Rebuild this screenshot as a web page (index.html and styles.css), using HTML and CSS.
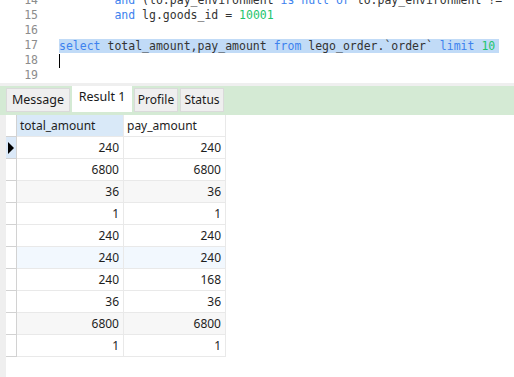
FILE: index.html
```html
<!DOCTYPE html>
<html lang="en">
<head>
<meta charset="UTF-8" />
<title>Query Result</title>
<link rel="stylesheet" href="styles.css">
</head>
<body>

<div class="editor">
  <div class="gutter">
    <div class="ln">14</div>
    <div class="ln">15</div>
    <div class="ln">16</div>
    <div class="ln">17</div>
    <div class="ln">18</div>
    <div class="ln">19</div>
  </div>
  <div class="code">
    <div class="line">        <span class="kw">and</span> (lo.pay_environment <span class="kw">is null or</span> lo.pay_environment !=</div>
    <div class="line">        <span class="kw">and</span> lg.goods_id = <span class="num">10001</span></div>
    <div class="line"> </div>
    <div class="line"><span class="sel"><span class="kw">select</span> total_amount,pay_amount <span class="kw">from</span> lego_order.`order` <span class="kw">limit</span> <span class="num">10</span></span></div>
    <div class="line"><span class="caret"></span></div>
    <div class="line"> </div>
  </div>
</div>

<div class="sep"></div>

<div class="tabbar">
  <div class="tab tab-message">Message</div>
  <div class="tab tab-result active">Result 1</div>
  <div class="tab tab-profile">Profile</div>
  <div class="tab tab-status">Status</div>
</div>

<div class="results">
  <div class="strip"></div>
  <table class="grid">
    <thead>
      <tr>
        <th class="ind"></th>
        <th class="col-total focus">total_amount</th>
        <th class="col-pay">pay_amount</th>
      </tr>
    </thead>
    <tbody>
      <tr class="current"><td class="ind"><span class="arrow"></span></td><td>240</td><td>240</td></tr>
      <tr><td class="ind"></td><td>6800</td><td>6800</td></tr>
      <tr class="alt"><td class="ind"></td><td>36</td><td>36</td></tr>
      <tr><td class="ind"></td><td>1</td><td>1</td></tr>
      <tr><td class="ind"></td><td>240</td><td>240</td></tr>
      <tr class="hover"><td class="ind"></td><td>240</td><td>240</td></tr>
      <tr><td class="ind"></td><td>240</td><td>168</td></tr>
      <tr><td class="ind"></td><td>36</td><td>36</td></tr>
      <tr class="alt"><td class="ind"></td><td>6800</td><td>6800</td></tr>
      <tr><td class="ind"></td><td>1</td><td>1</td></tr>
    </tbody>
  </table>
</div>

</body>
</html>
```

FILE: styles.css
```css
body {
  margin: 0;
  width: 514px;
  height: 377px;
  overflow: hidden;
  background: #fff;
  font-family: "Noto Sans", sans-serif;
}
.editor {
  height: 83px;
  overflow: hidden;
  display: flex;
  background: #fff;
  font-family: "DejaVu Sans Mono", monospace;
  font-size: 11.5px;
  line-height: 15px;
}
.gutter {
  width: 38px;
  margin-top: -7px;
  text-align: right;
  color: #8c8c8c;
}
.code {
  margin-top: -7px;
  padding-left: 21px;
  color: #333;
}
.line {
  height: 15px;
  white-space: pre;
}
.kw {
  color: #3d82ee;
}
.num {
  color: #1ec46c;
}
.sel {
  display: inline-block;
  height: 14px;
  padding-right: 4px;
  margin-top: 1px;
  line-height: 14px;
  vertical-align: top;
  background: #c1dbf7;
}
.caret {
  display: inline-block;
  width: 1px;
  height: 14px;
  margin-top: 1px;
  vertical-align: top;
  background: #000;
}
.sep {
  height: 3px;
  background: #efefef;
}
.tabbar {
  height: 29px;
  display: flex;
  align-items: flex-start;
  gap: 2px;
  padding-left: 6px;
  background: #d4ead4;
}
.tab {
  box-sizing: border-box;
  margin-top: 2px;
  height: 24px;
  line-height: 22px;
  text-align: center;
  font-size: 12px;
  color: #1a1a1a;
  background: #efefef;
  border: 1px solid #dadada;
}
.tab-message { width: 64px; font-size: 12.5px; }
.tab-result { width: 60px; font-size: 12.5px; }
.tab-profile { width: 44px; }
.tab-status { width: 44px; }
.tab.active {
  margin-top: 0;
  height: 26px;
  line-height: 20px;
  background: #fff;
  border-color: #fff;
}
.results {
  display: flex;
  height: 262px;
}
.strip {
  width: 6px;
  background: #efefef;
}
.grid {
  border-collapse: collapse;
  align-self: flex-start;
  font-size: 12px;
  color: #1e1e1e;
}
.grid th,
.grid td {
  padding: 0 4px 0 3px;
  height: 21px;
  line-height: 21px;
  border: 1px solid #e9e9e9;
  border-top: none;
}
.grid th {
  text-align: left;
  font-weight: normal;
  background: #fff;
}
.grid td {
  text-align: right;
}
.grid .ind {
  width: 10px;
  padding: 0;
  border-left: none;
  border-right: 1px solid #d2d2d2;
  border-bottom: 1px solid #d2d2d2;
  background: #fff;
}
.col-total {
  width: 99px;
}
.col-pay {
  width: 94px;
}
.grid th.focus {
  background: #d9e9f8;
}
.grid tr.alt td {
  background: #f7f7f7;
}
.grid tr.hover td {
  background: #f2f8fe;
}
.grid tr.alt td.ind,
.grid tr.hover td.ind {
  background: #fff;
}
.grid tr.current td.ind {
  background: #dbe9f8;
  vertical-align: middle;
}
.arrow {
  display: block;
  width: 0;
  height: 0;
  margin-left: 2px;
  border-left: 6px solid #000;
  border-top: 6px solid transparent;
  border-bottom: 6px solid transparent;
}
```
